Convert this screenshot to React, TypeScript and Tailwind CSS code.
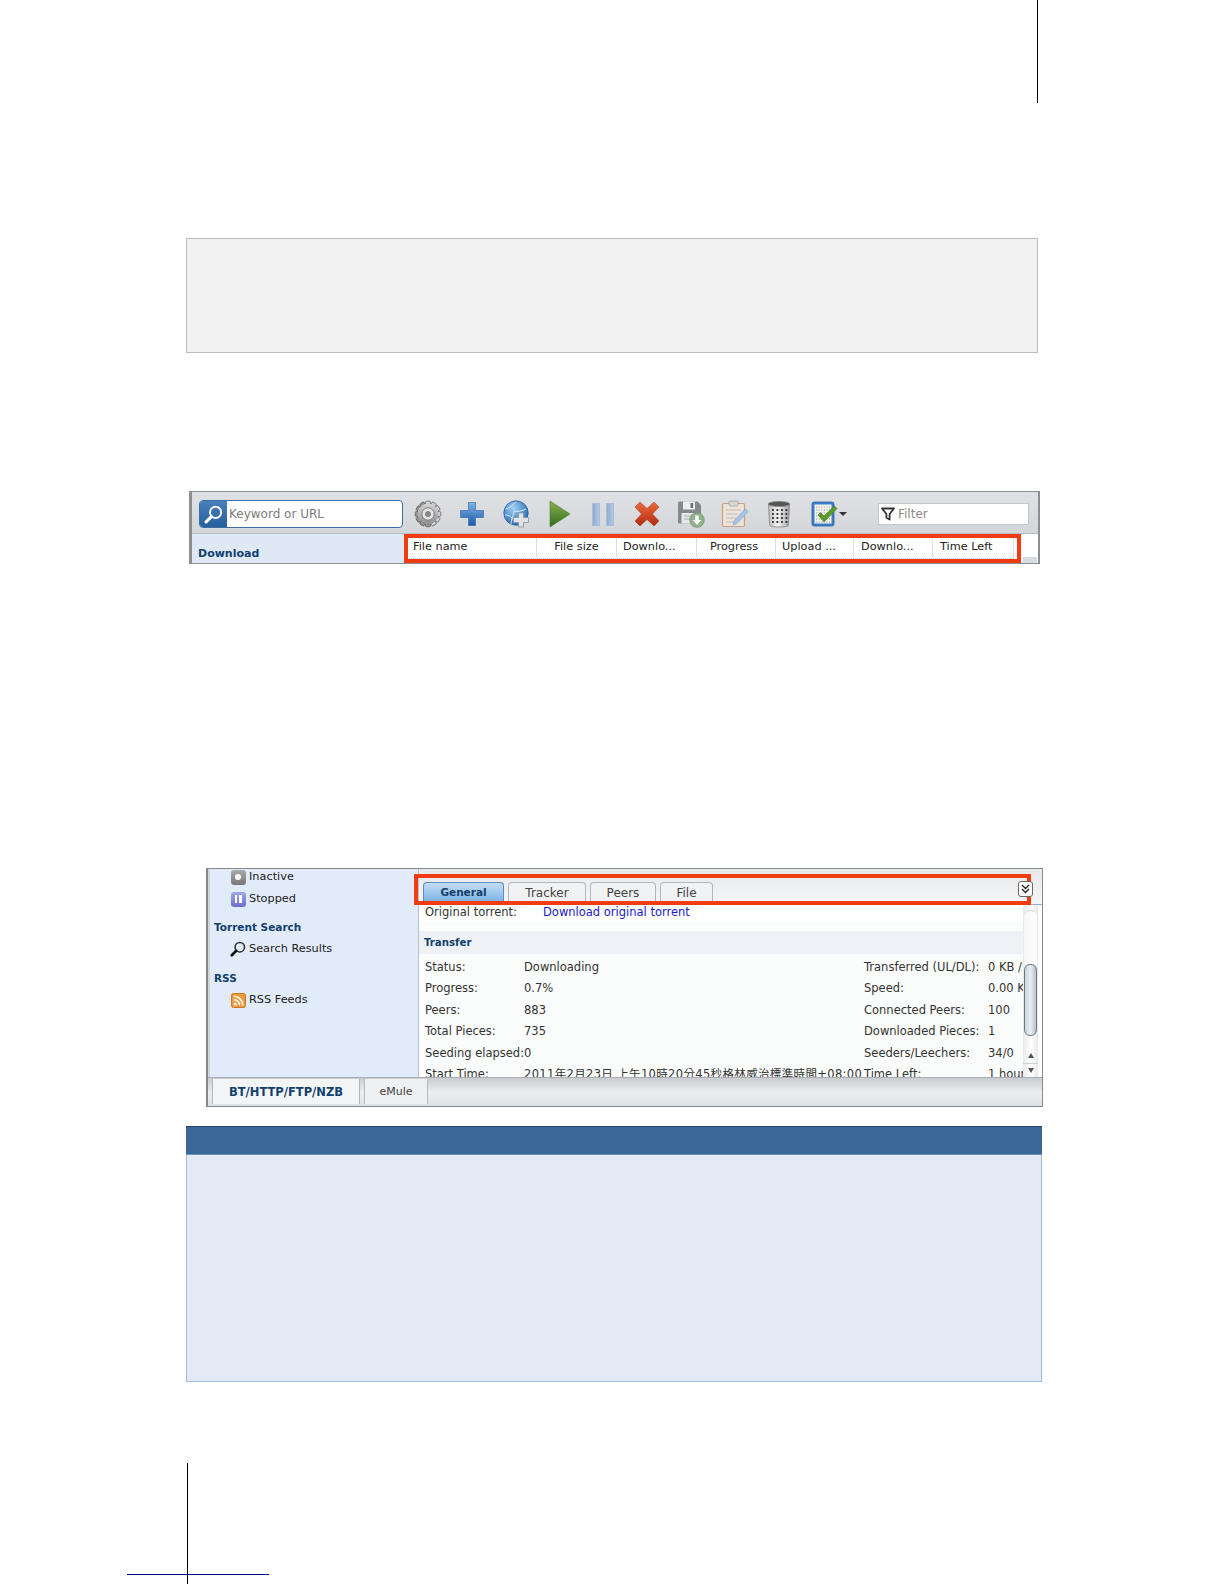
import React from 'react';

const UI_FONT = 'font-["DejaVu_Sans","Noto_Sans_CJK_TC",sans-serif]';

const Gear = () => (
  <svg width="28" height="28" viewBox="0 0 28 28">
    <defs>
      <linearGradient id="gearFill" x1="0" y1="0" x2="0" y2="1">
        <stop offset="0" stopColor="#d4d4d4" />
        <stop offset="1" stopColor="#8e8e8e" />
      </linearGradient>
    </defs>
    {[0, 30, 60, 90, 120, 150].map((a) => (
      <rect key={a} x="11.5" y="1.2" width="5" height="25.6" rx="1.2" fill="url(#gearFill)" stroke="#555" strokeWidth="0.7" transform={`rotate(${a} 14 14)`} />
    ))}
    <circle cx="14" cy="14" r="10.4" fill="url(#gearFill)" />
    <circle cx="14" cy="14" r="6.2" fill="#e4e4e4" stroke="#777" strokeWidth="1" />
    <circle cx="14" cy="14" r="2.6" fill="#8a8a8a" stroke="#666" strokeWidth="0.6" />
  </svg>
);

const Plus = () => (
  <svg width="26" height="26" viewBox="0 0 26 26">
    <defs>
      <linearGradient id="plusFill" x1="0" y1="0" x2="0" y2="1">
        <stop offset="0" stopColor="#7fb0e4" />
        <stop offset="1" stopColor="#1d5ba6" />
      </linearGradient>
    </defs>
    <path d="M9.5 1.5h7v8h8v7h-8v8h-7v-8h-8v-7h8z" fill="url(#plusFill)" stroke="#2b64a8" strokeWidth="0.6" />
  </svg>
);

const GlobePlus = () => (
  <svg width="28" height="28" viewBox="0 0 28 28">
    <defs>
      <radialGradient id="globeFill" cx="0.4" cy="0.3" r="0.8">
        <stop offset="0" stopColor="#9fd0f5" />
        <stop offset="1" stopColor="#1a5eae" />
      </radialGradient>
    </defs>
    <circle cx="13" cy="13" r="12.2" fill="url(#globeFill)" stroke="#1e5a9e" strokeWidth="0.8" />
    <path d="M3 9c5-1 7-5 10-7M8 24c0-6 3-9 3-13 4 1 8 0 12-2M2 15c4 0 7 2 9 6" fill="none" stroke="#e4f1fb" strokeWidth="0.9" />
    <path d="M15.5 13h5v4.5h5v5h-5v4.5h-5v-4.5h-5v-5h5z" fill="#dfe3e6" stroke="#8b9298" strokeWidth="0.8" />
  </svg>
);

const Play = () => (
  <svg width="22" height="28" viewBox="0 0 22 28">
    <defs>
      <linearGradient id="playFill" x1="0" y1="0" x2="0" y2="1">
        <stop offset="0" stopColor="#8cb24f" />
        <stop offset="1" stopColor="#2e6b1c" />
      </linearGradient>
    </defs>
    <path d="M1 1l20 13L1 27z" fill="url(#playFill)" stroke="#4b7a2b" strokeWidth="0.6" />
  </svg>
);

const Pause = () => (
  <div className="flex gap-[6px]">
    <div className="w-[8px] h-[23px] bg-linear-to-r from-[#8fadd3] to-[#b4c8e2] border border-[#a9bdd8]" />
    <div className="w-[8px] h-[23px] bg-linear-to-r from-[#8fadd3] to-[#b4c8e2] border border-[#a9bdd8]" />
  </div>
);

const Cross = () => (
  <svg width="26" height="26" viewBox="0 0 26 26">
    <defs>
      <linearGradient id="crossFill" x1="0" y1="0" x2="0" y2="1">
        <stop offset="0" stopColor="#ea6a3c" />
        <stop offset="1" stopColor="#b42b12" />
      </linearGradient>
    </defs>
    <path d="M6 1l7 6.5L20 1l5 5-6.5 7 6.5 7-5 5-7-6.5L6 25l-5-5 6.5-7L1 6z" fill="url(#crossFill)" stroke="#a8331a" strokeWidth="0.5" />
  </svg>
);

const SaveDisk = () => (
  <svg width="28" height="28" viewBox="0 0 28 28">
    <path d="M1 3a1.5 1.5 0 011.5-1.5h18L24 5v17a1.5 1.5 0 01-1.5 1.5h-20A1.5 1.5 0 011 22z" fill="#85898d" />
    <rect x="6" y="1.5" width="12" height="8" fill="#eceded" />
    <rect x="13.5" y="3" width="2.6" height="5" fill="#6c7074" />
    <rect x="4.5" y="13" width="15" height="10.5" fill="#e8e9ea" />
    <path d="M7 16h9M7 19h9" stroke="#aaa" strokeWidth="1" />
    <circle cx="20" cy="20" r="7.4" fill="#8fb08a" stroke="#6f9269" strokeWidth="0.6" />
    <path d="M18.2 15.5h3.6v4.4h2.6L20 25l-4.4-5.1h2.6z" fill="#fff" />
  </svg>
);

const Notes = () => (
  <svg width="28" height="28" viewBox="0 0 28 28">
    <rect x="1.5" y="3.5" width="22" height="23" rx="1.5" fill="#eee3d6" stroke="#c99f80" strokeWidth="1.2" />
    <rect x="8" y="1" width="9" height="5" rx="1" fill="#d4d6d8" stroke="#9a9ea2" strokeWidth="0.7" />
    <path d="M5 10h15M5 14h12M5 18h10M5 22h8" stroke="#b9bcc0" strokeWidth="1.1" />
    <path d="M13 21l11-12 3 2.6-11 12-4 1.4z" fill="#a6c4e6" stroke="#86a8ce" strokeWidth="0.7" />
  </svg>
);

const Can = () => (
  <svg width="24" height="28" viewBox="0 0 24 28">
    <defs>
      <linearGradient id="canFill" x1="0" y1="0" x2="1" y2="0">
        <stop offset="0" stopColor="#bdbdbd" />
        <stop offset="0.45" stopColor="#f4f4f4" />
        <stop offset="1" stopColor="#a2a2a2" />
      </linearGradient>
    </defs>
    <path d="M1.5 4l1.2 21.5c1 2 17.6 2 18.6 0L22.5 4z" fill="url(#canFill)" stroke="#777" strokeWidth="0.7" />
    <ellipse cx="12" cy="4" rx="10.8" ry="2.6" fill="#555" stroke="#888" strokeWidth="0.8" />
    {[9, 13, 17, 21].map((y) =>
      [5, 9.5, 14, 18.5].map((x) => <rect key={`${x}-${y}`} x={x} y={y} width="1.8" height="2" fill="#333" />)
    )}
  </svg>
);

const CheckBox = () => (
  <svg width="27" height="27" viewBox="0 0 27 27">
    <rect x="1" y="1" width="22" height="24" rx="2" fill="#3c7cc8" stroke="#2a63a8" strokeWidth="0.8" />
    <rect x="3.5" y="3.5" width="17" height="19" fill="#f3f3ea" />
    {[6, 9, 12, 15, 18, 21].map((y) => (
      <path key={y} d={`M5 ${y}h14`} stroke="#8a9a9a" strokeWidth="0.9" strokeDasharray="1.2 1.4" />
    ))}
    <path d="M7 14l2.5-2.5 3.5 3.5L23.5 5 26 7.5 13 21z" fill="#5e9a2e" stroke="#487c22" strokeWidth="0.6" />
  </svg>
);

const Magnifier = ({ lens, handle, size }: { lens: string; handle: string; size: number }) => (
  <svg width={size} height={size} viewBox="0 0 18 18">
    <circle cx="11" cy="7" r="5.3" fill="none" stroke={lens} strokeWidth="1.8" />
    <path d="M7 11l-5 5" stroke={handle} strokeWidth="3" strokeLinecap="round" />
  </svg>
);

const Funnel = () => (
  <svg width="14" height="14" viewBox="0 0 14 14">
    <path d="M1 1.5h12L8.6 7v5.5l-3.2-1.7V7z" fill="#fff" stroke="#333" strokeWidth="1.8" strokeLinejoin="round" />
  </svg>
);

const RssIcon = () => (
  <svg width="15" height="15" viewBox="0 0 15 15">
    <rect x="0.5" y="0.5" width="14" height="14" rx="2" fill="#ef9a3a" stroke="#c9762a" />
    <circle cx="4.2" cy="11" r="1.6" fill="#fff" />
    <path d="M2.8 6.6a5.6 5.6 0 015.7 5.7M2.8 3.2a9 9 0 019 9" fill="none" stroke="#fff" strokeWidth="1.6" />
  </svg>
);

const HEADERS = [
  { label: 'File name', width: 'w-[128px]', align: 'pl-[4px]' },
  { label: 'File size', width: 'w-[80px]', align: 'justify-center' },
  { label: 'Downlo...', width: 'w-[80px]', align: 'pl-[6px]' },
  { label: 'Progress', width: 'w-[79px]', align: 'justify-center pr-[4px]' },
  { label: 'Upload ...', width: 'w-[78px]', align: 'pl-[6px]' },
  { label: 'Downlo...', width: 'w-[79px]', align: 'pl-[7px]' },
  { label: 'Time Left', width: 'w-[81px]', align: 'pl-[7px]' },
];

const HeaderCell = ({ label, width, align }: { label: string; width: string; align: string }) => (
  <div className={`${width} ${align} flex items-center h-[20px] pb-[2px] border-r border-[#dcdfe3] text-[11.3px] text-[#222] whitespace-nowrap`}>
    {label}
  </div>
);

const ToolbarShot = () => (
  <div className="w-[851px] h-[73px] mt-[138px] ml-[189px] border border-[#8b8e92] border-l-[3px] border-r-[2px] bg-white">
    <div className="h-[42px] pt-[3px] flex items-center bg-linear-to-b from-[#dfe1e4] to-[#d4d7da] border-b border-[#b9bcc0]">
      <div className="ml-[7px] w-[204px] h-[28px] flex rounded-[4px] border border-[#3a6ea5] bg-white overflow-hidden">
        <div className="w-[27px] bg-linear-to-b from-[#4a80bb] to-[#24609e] flex items-center justify-center">
          <Magnifier lens="#fff" handle="#fff" size={19} />
        </div>
        <div className="pl-[2px] flex items-center text-[12px] text-[#7b7b7b]">Keyword or URL</div>
      </div>
      <div className="ml-[11px] w-[28px] flex justify-center"><Gear /></div>
      <div className="ml-[17px] w-[26px] flex justify-center"><Plus /></div>
      <div className="ml-[18px] w-[28px] flex justify-center"><GlobePlus /></div>
      <div className="ml-[18px] w-[22px] flex justify-center"><Play /></div>
      <div className="ml-[20px] w-[24px] flex justify-center"><Pause /></div>
      <div className="ml-[19px] w-[26px] flex justify-center"><Cross /></div>
      <div className="ml-[17px] w-[28px] flex justify-center"><SaveDisk /></div>
      <div className="ml-[16px] w-[28px] flex justify-center"><Notes /></div>
      <div className="ml-[18px] w-[24px] flex justify-center"><Can /></div>
      <div className="ml-[20px] w-[27px] flex justify-center"><CheckBox /></div>
      <div className="ml-[1px] w-0 h-0 border-x-[4px] border-x-transparent border-t-[4px] border-t-[#333]" />
      <div className="ml-[31px] w-[151px] h-[22px] flex items-center gap-[3px] pl-[2px] bg-white border border-[#c5c8cb] text-[12px] text-[#8a8a8a]">
        <Funnel />
        Filter
      </div>
    </div>
    <div className="h-[29px] flex">
      <div className="w-[212px] bg-[#dfe9f6] pl-[6px] pt-[13px] text-[11px] leading-[14px] font-bold text-[#123f6d]">Download</div>
      <div className="w-[617px] border-4 border-[#f03c10] flex pl-[1px] bg-white">
        <div className="flex h-[21px] border-b border-dotted border-[#b6c6d8]">
          {HEADERS.map((h, i) => (
            <HeaderCell key={i} {...h} />
          ))}
        </div>
      </div>
      <div className="flex-1 flex items-end justify-end pr-[1px]">
        <div className="w-[14px] h-[6px] bg-[#d9dcdf]" />
      </div>
    </div>
  </div>
);

const NAV_TEXT = 'text-[11.3px] text-[#222]';

const NavItem = ({ icon, label, className }: { icon: React.ReactNode; label: string; className: string }) => (
  <div className={`flex items-center h-[16px] pl-[20px] gap-[3px] ${className}`}>
    <div className="w-[16px] flex justify-center">{icon}</div>
    <span className={NAV_TEXT}>{label}</span>
  </div>
);

const INFO_ROWS = [
  { l: 'Status:', v: 'Downloading', rl: 'Transferred (UL/DL):', rv: '0 KB / 0 KB' },
  { l: 'Progress:', v: '0.7%', rl: 'Speed:', rv: '0.00 KB/s' },
  { l: 'Peers:', v: '883', rl: 'Connected Peers:', rv: '100' },
  { l: 'Total Pieces:', v: '735', rl: 'Downloaded Pieces:', rv: '1' },
  { l: 'Seeding elapsed:', v: '0', rl: 'Seeders/Leechers:', rv: '34/0' },
];

const InfoRow = ({ l, v, rl, rv, valueClass = '' }: { l: string; v: string; rl: string; rv: string; valueClass?: string }) => (
  <div className="flex h-[21.4px] items-center pl-[6px] text-[11.5px] text-[#333] whitespace-nowrap">
    <div className="w-[99px] shrink-0">{l}</div>
    <div className={`w-[340px] shrink-0 ${valueClass}`}>{v}</div>
    <div className="w-[124px] shrink-0">{rl}</div>
    <div className="w-[60px] shrink-0">{rv}</div>
  </div>
);

const TAB_BASE = 'h-[19px] flex items-center justify-center rounded-t-[4px] border border-b-0 pt-[1px]';

const Scrollbar = () => (
  <div className="w-[15px] h-full bg-linear-to-r from-[#e8e9eb] via-white to-[#e8e9eb] flex flex-col items-center">
    <div className="w-[13px] h-[54px] mt-[5px] rounded-t-[7px] bg-linear-to-r from-[#f6f6f6] to-white border-t border-[#d2d5d8]" />
    <div className="w-[13px] h-[72px] rounded-[6px] border border-[#6a7a88] bg-linear-to-r from-[#cdd6df] via-[#e9eef2] to-[#b7c2cc]" />
    <div className="h-[12px]" />
    <div className="h-[16px] w-full flex items-center justify-center border-b border-[#cfd2d5]">
      <div className="w-0 h-0 border-x-[3px] border-x-transparent border-b-[5px] border-b-[#555]" />
    </div>
    <div className="h-[13px] w-full flex items-center justify-center">
      <div className="w-0 h-0 border-x-[3px] border-x-transparent border-t-[5px] border-t-[#555]" />
    </div>
  </div>
);

const DetailShot = () => (
  <div className="w-[837px] h-[239px] mt-[304px] ml-[206px] border border-[#85888c] border-l-[2px] flex flex-col bg-white">
    <div className="h-[208px] flex">
      <div className="w-[211px] border-l-[2px] border-l-[#d2d5d9] bg-[#e1ebfa] border-r border-r-[#b9c2cc] overflow-hidden">
        <NavItem
          className="mt-0"
          icon={
            <div className="w-[15px] h-[15px] rounded-[3px] bg-linear-to-b from-[#aaa] to-[#777] flex items-center justify-center">
              <div className="w-[6px] h-[6px] rounded-full bg-white" />
            </div>
          }
          label="Inactive"
        />
        <NavItem
          className="mt-[6px]"
          icon={
            <div className="w-[15px] h-[15px] rounded-[3px] bg-linear-to-b from-[#a3a5ea] to-[#6d70cf] flex items-center justify-center gap-[2px]">
              <div className="w-[2.5px] h-[8px] bg-white" />
              <div className="w-[2.5px] h-[8px] bg-white" />
            </div>
          }
          label="Stopped"
        />
        <div className="mt-[12px] pl-[4px] text-[10.5px] leading-[16px] font-bold text-[#123f6d]">Torrent Search</div>
        <NavItem className="mt-[6px]" icon={<Magnifier lens="#333" handle="#111" size={16} />} label="Search Results" />
        <div className="mt-[13px] pl-[4px] text-[10.5px] leading-[16px] font-bold text-[#123f6d]">RSS</div>
        <NavItem className="mt-[6px]" icon={<RssIcon />} label="RSS Feeds" />
      </div>
      <div className="flex-1 min-w-0 flex flex-col">
        <div className="h-[36px] relative flex items-end bg-linear-to-b from-[#e6e8ea] to-[#f5f6f7] border-b border-[#8fb0d0]">
          <div className="flex gap-[4px] pl-[4px] pb-[3px]">
            <div className={`${TAB_BASE} w-[81px] text-[10.5px] font-bold text-[#123f6d] border-[#5a8dc0] bg-linear-to-b from-[#c5def5] to-[#7fb3e3]`}>General</div>
            <div className={`${TAB_BASE} w-[78px] text-[12px] text-[#444] border-[#b4b7ba] bg-[#f1f2f3]`}>Tracker</div>
            <div className={`${TAB_BASE} w-[66px] text-[12px] text-[#444] border-[#b4b7ba] bg-[#f1f2f3]`}>Peers</div>
            <div className={`${TAB_BASE} w-[53px] text-[12px] text-[#444] border-[#b4b7ba] bg-[#f1f2f3]`}>File</div>
          </div>
          <div className="absolute left-[-5px] top-[5px] w-[617px] h-[31px] border-4 border-[#f03c10]" />
          <div className="absolute right-[9px] top-[12px] w-[15px] h-[16px] rounded-[3px] border border-[#666] bg-white flex items-center justify-center">
            <svg width="9" height="10" viewBox="0 0 9 10">
              <path d="M1 1l3.5 3.5L8 1M1 5l3.5 3.5L8 5" fill="none" stroke="#222" strokeWidth="1.3" />
            </svg>
          </div>
        </div>
        <div className="flex-1 min-h-0 flex">
          <div className="w-[604px] overflow-hidden bg-[#fbfcfc]">
            <div className="mt-[-2px] h-[19px] flex items-center pl-[6px] bg-white text-[11.5px] text-[#333] whitespace-nowrap">
              <div className="w-[118px]">Original torrent:</div>
              <div className="text-[#1a1acb]">Download original torrent</div>
            </div>
            <div className="mt-[9px] h-[23px] flex items-center pl-[5px] bg-[#eef2f7] text-[10.2px] font-bold text-[#123f6d]">Transfer</div>
            <div className="mt-[3px]">
              {INFO_ROWS.map((r) => (
                <InfoRow key={r.l} {...r} />
              ))}
              <InfoRow
                l="Start Time:"
                v="2011年2月23日 上午10時20分45秒格林威治標準時間+08:00"
                rl="Time Left:"
                rv="1 hour"
                valueClass="tracking-[0.35px]"
              />
            </div>
          </div>
          <Scrollbar />
        </div>
      </div>
    </div>
    <div className="flex-1 flex pl-[4px] pt-[1px] bg-linear-to-b from-[#c9ccd0] via-[#ebedef] to-[#dfe2e5] border-t border-[#a9acb0]">
      <div className="w-[148px] h-[25px] flex items-center justify-center pt-[2px] bg-[#f4f5f6] border-x border-[#b4b7ba] text-[11.5px] font-bold text-[#123f6d]">BT/HTTP/FTP/NZB</div>
      <div className="ml-[4px] w-[64px] h-[25px] flex items-center justify-center pt-[2px] bg-[#eef0f1] border-x border-[#b4b7ba] text-[11px] text-[#444]">eMule</div>
    </div>
  </div>
);

export default function App() {
  return (
    <div className={`relative w-[1224px] h-[1584px] overflow-hidden bg-white ${UI_FONT}`}>
      {/* print crop marks */}
      <div className="absolute left-[1037px] top-0 w-px h-[103px] bg-black" />
      <div className="absolute left-[187px] top-[1463px] w-px h-[121px] bg-black" />
      <div className="absolute left-[127px] top-[1574px] w-[142px] h-px bg-[#00007f]" />

      <div className="pt-[238px]">
        <div className="ml-[186px] w-[852px] h-[115px] bg-[#f1f1f1] border border-[#bcbcbc]" />
        <ToolbarShot />
        <DetailShot />
        <div className="mt-[19px] ml-[186px] w-[856px] h-[256px] bg-[#e4eaf5] border border-[#a3bbdc] border-t-0">
          <div className="ml-[-1px] mr-[-1px] h-[29px] bg-[#3b6698] border-t border-[#24476f] border-b border-b-[#6f8fb8]" />
        </div>
      </div>
    </div>
  );
}
